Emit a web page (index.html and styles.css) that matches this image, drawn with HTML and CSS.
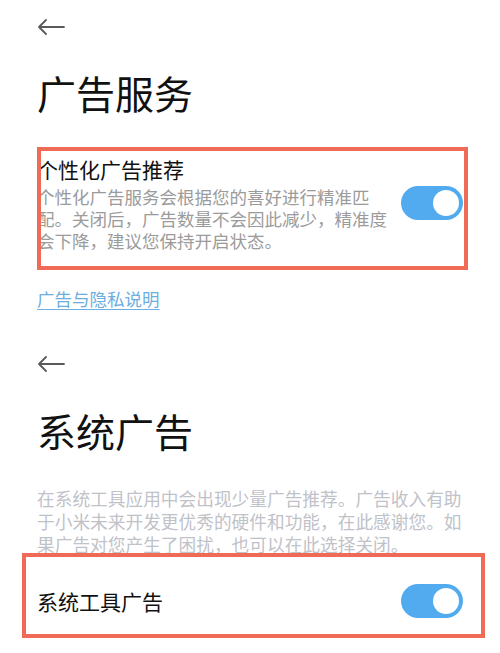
FILE: index.html
```html
<!DOCTYPE html>
<html lang="zh-CN">
<head>
<meta charset="utf-8">
<link rel="stylesheet" href="styles.css">
</head>
<body>
<div class="page">
  <div class="nav nav-first">
    <svg class="back" width="28" height="16" viewBox="0 0 28 16"><path d="M27 8H2M9 1L2 8l7 7" fill="none" stroke="#5a5a5a" stroke-width="1.8" stroke-linecap="round" stroke-linejoin="round"/></svg>
  </div>
  <h1 class="title title-first">广告服务</h1>
  <div class="setting setting-first">
    <div class="setting-text">
      <div class="setting-name">个性化广告推荐</div>
      <div class="setting-desc">个性化广告服务会根据您的喜好进行精准匹配。关闭后，广告数量不会因此减少，精准度会下降，建议您保持开启状态。</div>
    </div>
    <div class="toggle toggle-first"><span class="knob"></span></div>
  </div>
  <a class="link">广告与隐私说明</a>
  <div class="nav nav-second">
    <svg class="back" width="28" height="16" viewBox="0 0 28 16"><path d="M27 8H2M9 1L2 8l7 7" fill="none" stroke="#5a5a5a" stroke-width="1.8" stroke-linecap="round" stroke-linejoin="round"/></svg>
  </div>
  <h1 class="title title-second">系统广告</h1>
  <p class="intro">在系统工具应用中会出现少量广告推荐。广告收入有助于小米未来开发更优秀的硬件和功能，在此感谢您。如果广告对您产生了困扰，也可以在此选择关闭。</p>
  <div class="setting setting-second">
    <div class="setting-name">系统工具广告</div>
    <div class="toggle"><span class="knob"></span></div>
  </div>
</div>
<div class="mark mark-first"></div>
<div class="mark mark-second"></div>
</body>
</html>
```
FILE: styles.css
```css
html, body {
  margin: 0;
  padding: 0;
  background: #ffffff;
}
body {
  position: relative;
  width: 500px;
  height: 653px;
  overflow: hidden;
  font-family: "Noto Sans CJK SC", "Noto Sans", sans-serif;
  color: #111111;
}
.page {
  padding: 0 36px 0 37px;
  display: flex;
  flex-direction: column;
}
.nav {
  height: 16px;
  display: flex;
  align-items: center;
}
.back { display: block; }
.nav-first { margin-top: 19px; }
.nav-second { margin-top: 46px; }
.title {
  margin: 0;
  font-size: 39px;
  font-weight: 400;
  line-height: 48px;
  color: #111111;
}
.title-first { margin-top: 33px; }
.title-second { margin-top: 34px; }
.setting {
  display: flex;
  align-items: center;
  justify-content: space-between;
}
.setting-first { margin-top: 39px; }
.setting-text {
  width: 358px;
  display: flex;
  flex-direction: column;
}
.setting-name {
  font-size: 21px;
  line-height: 28px;
  color: #111111;
}
.setting-desc {
  margin-top: 3px;
  font-size: 17.5px;
  line-height: 22px;
  color: #9b9b9b;
}
.toggle {
  position: relative;
  width: 62px;
  height: 34px;
  border-radius: 17px;
  background: #52abef;
  flex: none;
  margin-right: 1px;
}
.toggle-first { align-self: flex-start; margin-top: 31px; }
.knob {
  position: absolute;
  right: 4px;
  top: 4px;
  width: 26px;
  height: 26px;
  border-radius: 50%;
  background: #ffffff;
}
.link {
  margin-top: 36px;
  align-self: flex-start;
  font-size: 17.5px;
  line-height: 22px;
  color: #6caee0;
  text-decoration: underline;
  text-underline-offset: 3px;
}
.intro {
  margin: 33px 0 0;
  width: 432px;
  font-size: 17.7px;
  line-height: 23px;
  color: #bfc2c8;
}
.setting-second { margin-top: 28px; }
.mark {
  position: absolute;
  border: 4px solid #ef6b56;
  box-sizing: border-box;
}
.mark-first {
  left: 37px;
  top: 147px;
  width: 431px;
  height: 123px;
}
.mark-second {
  left: 22px;
  top: 553px;
  width: 463px;
  height: 85px;
}
```
